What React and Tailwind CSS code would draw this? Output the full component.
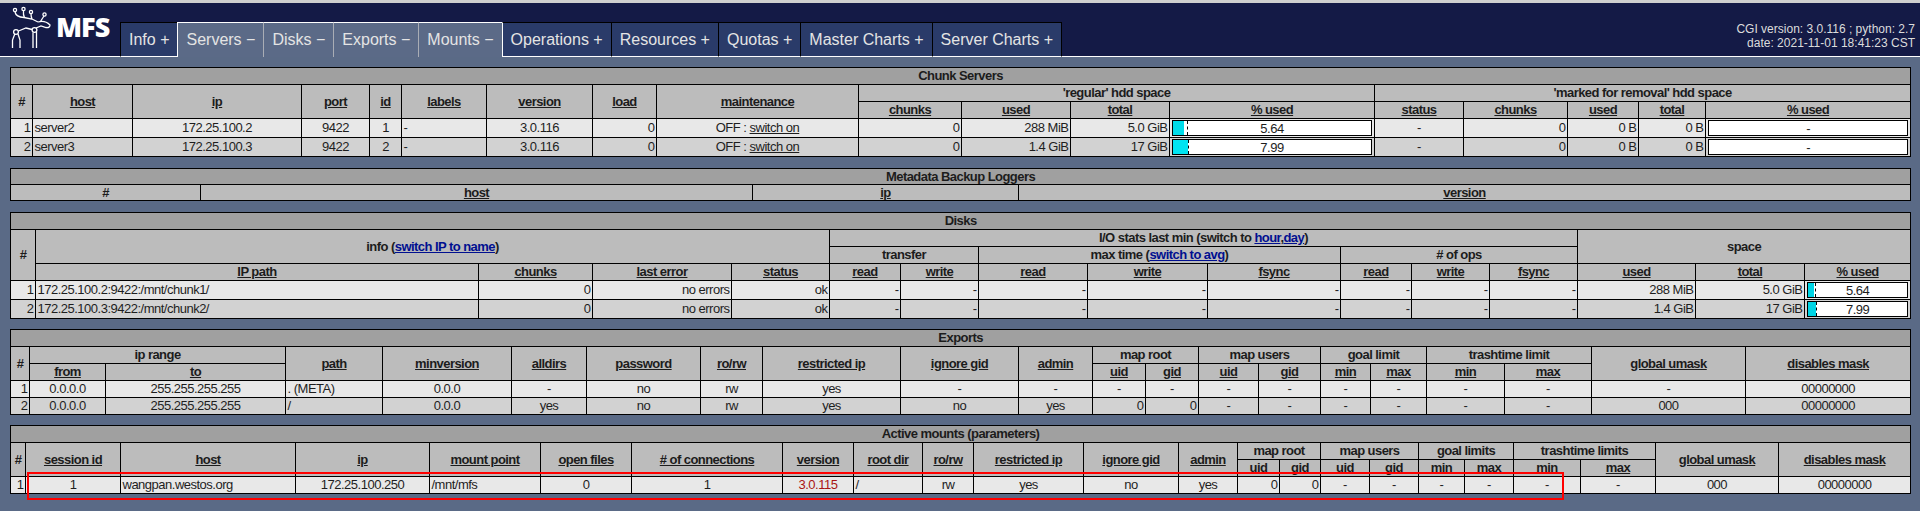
const leftTabs = [
  ["Info +", false],
  ["Servers −", true],
  ["Disks −", true],
  ["Exports −", true],
  ["Mounts −", true],
  ["Operations +", false],
  ["Resources +", false],
  ["Quotas +", false],
  ["Master Charts +", false],
  ["Server Charts +", false],
];

function Logo() {
  return (
    <div className="flex w-[120px] shrink-0 self-stretch">
      <svg className="w-[56px] h-[53px] shrink-0" viewBox="0 3 56 53" fill="none" stroke="#fff" strokeWidth="1.3">
        <circle cx="15" cy="10" r="1.6" />
        <circle cx="23.5" cy="9" r="1.6" />
        <circle cx="31" cy="12" r="1.6" />
        <circle cx="44.5" cy="14.5" r="1.6" />
        <path d="M15 12Q16 17 24 17.5L32 19L38 22M23.5 10.6Q23 15 24.5 17.5M31 13.6Q31 17 32 19M44 16Q42 19 40.5 21.5" />
        <path d="M38 22Q45 20 50 25Q50 28 46 27.5L41 26L36 28" />
        <circle cx="34.5" cy="30" r="2.4" />
        <circle cx="16" cy="32" r="2.4" />
        <path d="M32 29.5L26 28L18.5 31M14.8 34L12.5 40V48M18 34L20 40V48M33 32.5V48M36.5 32V48" />
      </svg>
      <span className="font-['Open_Sans',sans-serif] font-extrabold text-[27px] tracking-[-1px] leading-[53px] text-white -mt-[3px]">MFS</span>
    </div>
  );
}

function Header() {
  return (
    <div className="border-t-[3px] border-t-[#cfcfcf] border-b border-b-white bg-[#141a46] h-[57px] flex justify-between">
      <div className="flex items-end">
        <Logo />
        <div className="flex -mb-px">
          {leftTabs.map(([label, active], i) => (
            <div
              key={label}
              className={
                active
                  ? `h-[35px] px-2 border-l border-t border-t-white flex items-center text-[16px] text-[#e4e4e4] bg-[#5b6a87] ${i === 1 ? "border-l-white" : "border-l-[#a9adb5]"}`
                  : `h-[35px] px-2 border-l border-l-black border-t border-t-black border-b border-b-white flex items-center text-[16px] text-[#e4e4e4] bg-[#2a3b69] ${i === 9 ? "border-r border-r-black" : ""} ${i === 5 ? "border-l-white" : ""}`
              }
            >
              {label}
            </div>
          ))}
        </div>
      </div>
      <div className="self-end pb-[6px] pr-[5px] text-right text-[12px] leading-[14px] text-[#dcdcdc]">
        <div>CGI version: 3.0.116 ; python: 2.7</div>
        <div>date: 2021-11-01 18:41:23 CST</div>
      </div>
    </div>
  );
}

function Title({ span, children, low }) {
  return (
    <tr className={low ? "h-[16px]" : "h-[17px]"}>
      <th colSpan={span} className="border border-black bg-[#a0a0a0] p-0 font-bold text-[#1c1c1c] tracking-[-0.55px]">{children}</th>
    </tr>
  );
}

// sortable column head, underlined
function H({ children, r, c }) {
  return (
    <th rowSpan={r} colSpan={c} className="border border-black bg-[#bcbcbc] p-0 font-bold underline text-[#1c1c1c] tracking-[-0.55px]">{children}</th>
  );
}

// group head, no underline
function G({ children, r, c }) {
  return (
    <th rowSpan={r} colSpan={c} className="border border-black bg-[#bcbcbc] p-0 font-bold text-[#1c1c1c] tracking-[-0.55px]">{children}</th>
  );
}

function A({ children }) {
  return <span className="underline text-[#000f90]">{children}</span>;
}

function L({ children }) {
  return <td className="border border-black px-[1.5px] py-0 text-left whitespace-nowrap">{children}</td>;
}
function R({ children }) {
  return <td className="border border-black px-[1.5px] py-0 text-right whitespace-nowrap">{children}</td>;
}
function C({ children, red }) {
  return (
    <td className={`border border-black px-0.5 py-0 text-center whitespace-nowrap ${red ? "text-[#a81414]" : ""}`}>{children}</td>
  );
}

function Bar({ value, fill, mark, color }) {
  return (
    <td className="border border-black p-0">
      <div className="relative h-[16px] mx-[2px] border border-black bg-white text-center leading-[15px]">
        {fill > 0 && <div className={`absolute left-0 top-0 bottom-0 ${color}`} style={{ width: fill }} />}
        {mark > 0 && <div className="absolute top-0 bottom-0 border-l border-dashed border-black" style={{ left: mark }} />}
        <span className="relative">{value}</span>
      </div>
    </td>
  );
}

function Tbl({ children, cols }) {
  return (
    <table className="table-fixed w-[1900px] border-collapse border border-black text-[13px] leading-[14px] tracking-[-0.5px] text-[#1e1e1e] font-['Liberation_Sans',Arial,sans-serif]">
      {cols}
      <tbody>{children}</tbody>
    </table>
  );
}

function ChunkServers() {
  return (
    <Tbl
      cols={
        <colgroup>
          <col className="w-[22px]" /><col className="w-[100px]" /><col className="w-[169px]" /><col className="w-[68px]" />
          <col className="w-[32px]" /><col className="w-[85px]" /><col className="w-[106px]" /><col className="w-[64px]" />
          <col className="w-[202px]" /><col className="w-[103px]" /><col className="w-[109px]" /><col className="w-[99px]" />
          <col className="w-[205px]" /><col className="w-[89px]" /><col className="w-[104px]" /><col className="w-[71px]" />
          <col className="w-[67px]" /><col className="w-[205px]" />
        </colgroup>
      }
    >
      <Title span={18}>Chunk Servers</Title>
      <tr className="h-[17px]">
        <G r={2}>#</G><H r={2}>host</H><H r={2}>ip</H><H r={2}>port</H><H r={2}>id</H><H r={2}>labels</H>
        <H r={2}>version</H><H r={2}>load</H><H r={2}>maintenance</H>
        <G c={4}>'regular' hdd space</G><G c={5}>'marked for removal' hdd space</G>
      </tr>
      <tr className="h-[17px]">
        <H>chunks</H><H>used</H><H>total</H><H>% used</H>
        <H>status</H><H>chunks</H><H>used</H><H>total</H><H>% used</H>
      </tr>
      <tr className="h-[19px] bg-[#e8e8e8]">
        <R>1</R><L>server2</L><C>172.25.100.2</C><C>9422</C><C>1</C><L>-</L><C>3.0.116</C><R>0</R>
        <C>OFF : <span className="underline">switch on</span></C>
        <R>0</R><R>288 MiB</R><R>5.0 GiB</R>
        <Bar value="5.64" fill={11} mark={14} color="bg-[#00dcea]" />
        <C>-</C><R>0</R><R>0 B</R><R>0 B</R>
        <Bar value="-" fill={0} mark={0} />
      </tr>
      <tr className="h-[19px] bg-[#d2d2d2]">
        <R>2</R><L>server3</L><C>172.25.100.3</C><C>9422</C><C>2</C><L>-</L><C>3.0.116</C><R>0</R>
        <C>OFF : <span className="underline">switch on</span></C>
        <R>0</R><R>1.4 GiB</R><R>17 GiB</R>
        <Bar value="7.99" fill={15} mark={15} color="bg-[#00e4f2]" />
        <C>-</C><R>0</R><R>0 B</R><R>0 B</R>
        <Bar value="-" fill={0} mark={0} />
      </tr>
    </Tbl>
  );
}

function Loggers() {
  return (
    <Tbl
      cols={
        <colgroup>
          <col className="w-[190px]" /><col className="w-[552px]" /><col className="w-[266px]" /><col className="w-[892px]" />
        </colgroup>
      }
    >
      <Title span={4} low>Metadata Backup Loggers</Title>
      <tr className="h-[16px]">
        <G>#</G><H>host</H><H>ip</H><H>version</H>
      </tr>
    </Tbl>
  );
}

function Disks() {
  const rows = [
    ["1", "172.25.100.2:9422:/mnt/chunk1/", "288 MiB", "5.0 GiB", "5.64", 6, 7, "bg-[#e8e8e8]"],
    ["2", "172.25.100.3:9422:/mnt/chunk2/", "1.4 GiB", "17 GiB", "7.99", 8, 8, "bg-[#d2d2d2]"],
  ];
  return (
    <Tbl
      cols={
        <colgroup>
          <col className="w-[25px]" /><col className="w-[443px]" /><col className="w-[114px]" /><col className="w-[139px]" />
          <col className="w-[98px]" /><col className="w-[71px]" /><col className="w-[78px]" /><col className="w-[109px]" />
          <col className="w-[120px]" /><col className="w-[133px]" /><col className="w-[71px]" /><col className="w-[78px]" />
          <col className="w-[88px]" /><col className="w-[118px]" /><col className="w-[109px]" /><col className="w-[106px]" />
        </colgroup>
      }
    >
      <Title span={16}>Disks</Title>
      <tr className="h-[17px]">
        <G r={3}>#</G>
        <G r={2} c={4}>info (<A>switch IP to name</A>)</G>
        <G c={8}>I/O stats last min (switch to <A>hour</A>,<A>day</A>)</G>
        <G r={2} c={3}>space</G>
      </tr>
      <tr className="h-[17px]">
        <G c={2}>transfer</G>
        <G c={3}>max time (<A>switch to avg</A>)</G>
        <G c={3}># of ops</G>
      </tr>
      <tr className="h-[17px]">
        <H>IP path</H><H>chunks</H><H>last error</H><H>status</H>
        <H>read</H><H>write</H><H>read</H><H>write</H><H>fsync</H><H>read</H><H>write</H><H>fsync</H>
        <H>used</H><H>total</H><H>% used</H>
      </tr>
      {rows.map((r) => (
        <tr key={r[0]} className={`h-[19px] ${r[7]}`}>
          <R>{r[0]}</R><L>{r[1]}</L><R>0</R><R>no errors</R><R>ok</R>
          <R>-</R><R>-</R><R>-</R><R>-</R><R>-</R><R>-</R><R>-</R><R>-</R>
          <R>{r[2]}</R><R>{r[3]}</R>
          <Bar value={r[4]} fill={r[5]} mark={r[6]} color="bg-[#00d4e4]" />
        </tr>
      ))}
    </Tbl>
  );
}

function Exports() {
  return (
    <Tbl
      cols={
        <colgroup>
          <col className="w-[19px]" /><col className="w-[76px]" /><col className="w-[180px]" /><col className="w-[97px]" />
          <col className="w-[129px]" /><col className="w-[75px]" /><col className="w-[114px]" /><col className="w-[62px]" />
          <col className="w-[138px]" /><col className="w-[118px]" /><col className="w-[74px]" /><col className="w-[53px]" />
          <col className="w-[53px]" /><col className="w-[60px]" /><col className="w-[62px]" /><col className="w-[50px]" />
          <col className="w-[56px]" /><col className="w-[78px]" /><col className="w-[87px]" /><col className="w-[154px]" />
          <col className="w-[165px]" />
        </colgroup>
      }
    >
      <Title span={21}>Exports</Title>
      <tr className="h-[17px]">
        <G r={2}>#</G><G c={2}>ip range</G><H r={2}>path</H><H r={2}>minversion</H><H r={2}>alldirs</H>
        <H r={2}>password</H><H r={2}>ro/rw</H><H r={2}>restricted ip</H><H r={2}>ignore gid</H><H r={2}>admin</H>
        <G c={2}>map root</G><G c={2}>map users</G><G c={2}>goal limit</G><G c={2}>trashtime limit</G>
        <H r={2}>global umask</H><H r={2}>disables mask</H>
      </tr>
      <tr className="h-[17px]">
        <H>from</H><H>to</H><H>uid</H><H>gid</H><H>uid</H><H>gid</H><H>min</H><H>max</H><H>min</H><H>max</H>
      </tr>
      <tr className="h-[17px] bg-[#e8e8e8]">
        <R>1</R><C>0.0.0.0</C><C>255.255.255.255</C><L>. (META)</L><C>0.0.0</C><C>-</C><C>no</C><C>rw</C><C>yes</C>
        <C>-</C><C>-</C><C>-</C><C>-</C><C>-</C><C>-</C><C>-</C><C>-</C><C>-</C><C>-</C><C>-</C><C>00000000</C>
      </tr>
      <tr className="h-[17px] bg-[#d2d2d2]">
        <R>2</R><C>0.0.0.0</C><C>255.255.255.255</C><L>/</L><C>0.0.0</C><C>yes</C><C>no</C><C>rw</C><C>yes</C>
        <C>no</C><C>yes</C><R>0</R><R>0</R><C>-</C><C>-</C><C>-</C><C>-</C><C>-</C><C>-</C><C>000</C><C>00000000</C>
      </tr>
    </Tbl>
  );
}

function Mounts() {
  return (
    <div className="relative">
      <Tbl
        cols={
          <colgroup>
            <col className="w-[15px]" /><col className="w-[95px]" /><col className="w-[175px]" /><col className="w-[134px]" />
            <col className="w-[111px]" /><col className="w-[91px]" /><col className="w-[151px]" /><col className="w-[71px]" />
            <col className="w-[69px]" /><col className="w-[51px]" /><col className="w-[110px]" /><col className="w-[95px]" />
            <col className="w-[59px]" /><col className="w-[42px]" /><col className="w-[41px]" /><col className="w-[49px]" />
            <col className="w-[49px]" /><col className="w-[46px]" /><col className="w-[49px]" /><col className="w-[67px]" />
            <col className="w-[75px]" /><col className="w-[123px]" /><col className="w-[132px]" />
          </colgroup>
        }
      >
        <Title span={23}>Active mounts (parameters)</Title>
        <tr className="h-[17px]">
          <G r={2}>#</G><H r={2}>session id</H><H r={2}>host</H><H r={2}>ip</H><H r={2}>mount point</H>
          <H r={2}>open files</H><H r={2}># of connections</H><H r={2}>version</H><H r={2}>root dir</H><H r={2}>ro/rw</H>
          <H r={2}>restricted ip</H><H r={2}>ignore gid</H><H r={2}>admin</H>
          <G c={2}>map root</G><G c={2}>map users</G><G c={2}>goal limits</G><G c={2}>trashtime limits</G>
          <H r={2}>global umask</H><H r={2}>disables mask</H>
        </tr>
        <tr className="h-[17px]">
          <H>uid</H><H>gid</H><H>uid</H><H>gid</H><H>min</H><H>max</H><H>min</H><H>max</H>
        </tr>
        <tr className="h-[17px] bg-[#e8e8e8]">
          <R>1</R><C>1</C><L>wangpan.westos.org</L><C>172.25.100.250</C><L>/mnt/mfs</L><C>0</C><C>1</C>
          <C red>3.0.115</C><L>/</L><C>rw</C><C>yes</C><C>no</C><C>yes</C><R>0</R><R>0</R>
          <C>-</C><C>-</C><C>-</C><C>-</C><C>-</C><C>-</C><C>000</C><C>00000000</C>
        </tr>
      </Tbl>
      {/* annotation drawn over the screenshot */}
      <div className="absolute left-[17px] top-[47px] w-[1537px] h-[28px] border-2 border-[#ff0000] pointer-events-none" />
    </div>
  );
}

export default function App() {
  return (
    <div className="min-h-screen bg-[#5a6a86] font-['Liberation_Sans',Arial,sans-serif]">
      <Header />
      <div className="pt-[10px] pl-[10px] flex flex-col">
        <div className="mb-[11px]"><ChunkServers /></div>
        <div className="mb-[11px]"><Loggers /></div>
        <div className="mb-[10px]"><Disks /></div>
        <div className="mb-[10px]"><Exports /></div>
        <Mounts />
      </div>
    </div>
  );
}
